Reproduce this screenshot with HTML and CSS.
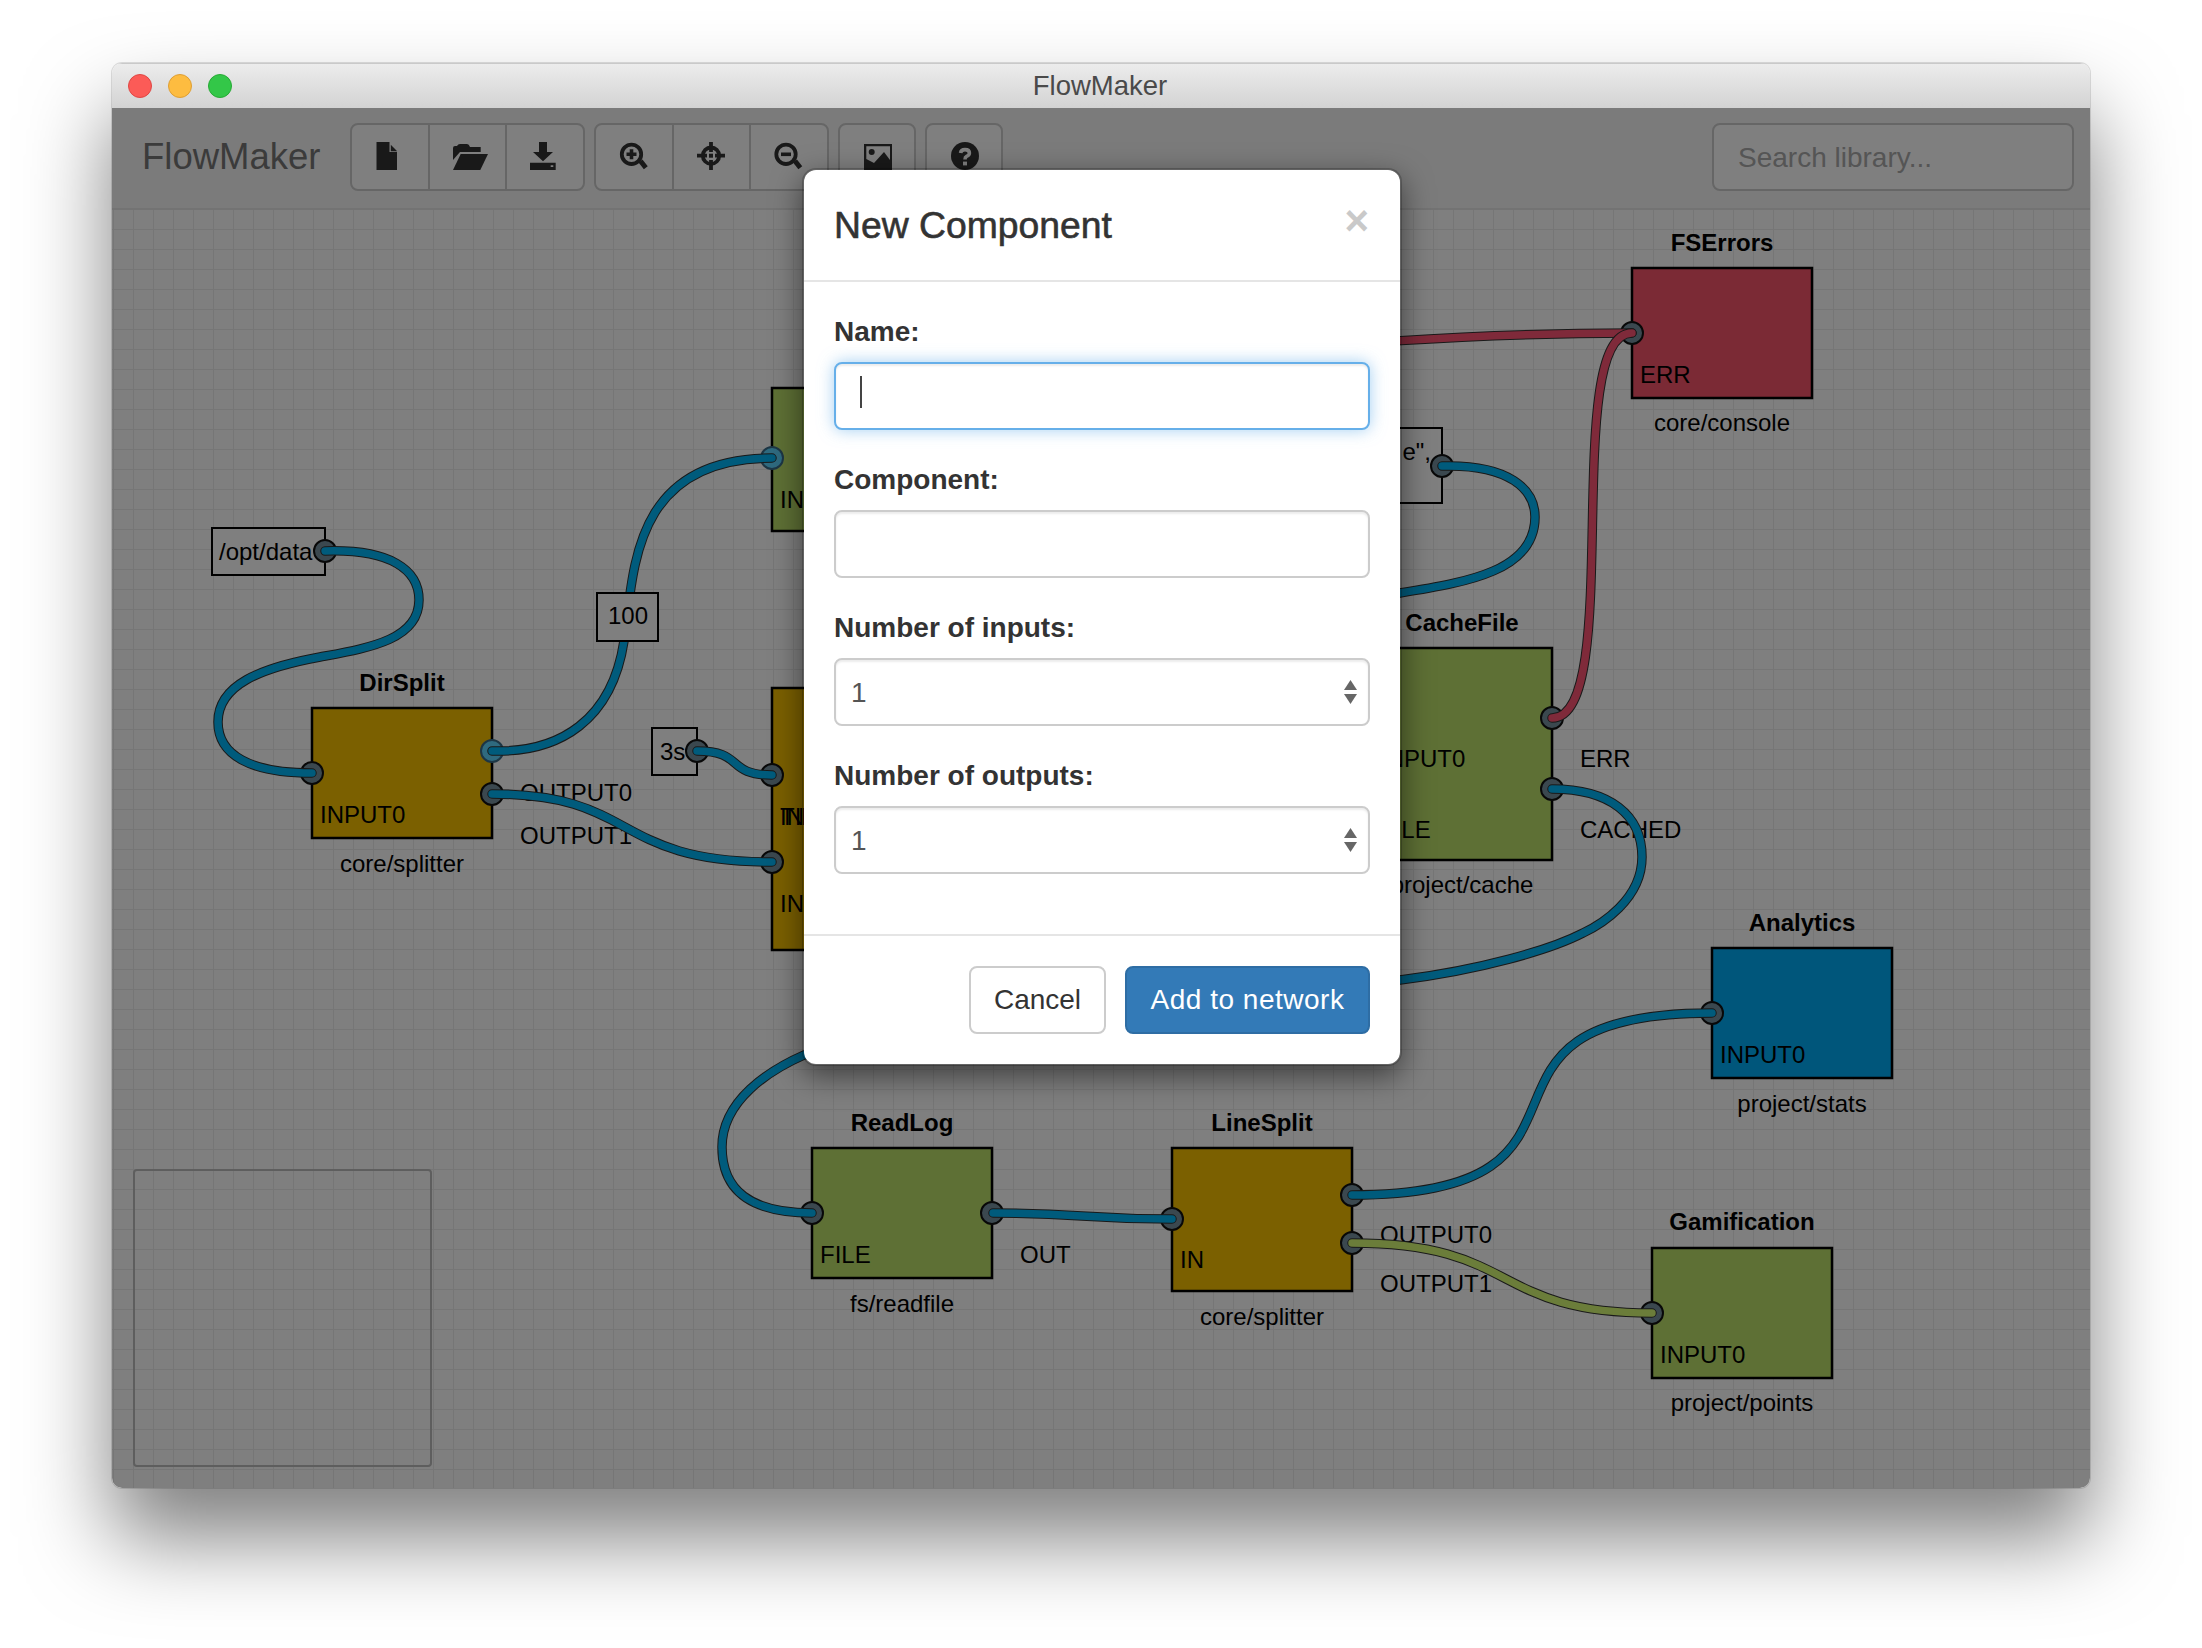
FILE: index.html
```html
<!DOCTYPE html>
<html lang="en">
<head>
<meta charset="utf-8">
<title>FlowMaker</title>
<link rel="stylesheet" href="styles.css">
</head>
<body>
<div class="window">
  <div class="titlebar">
    <div class="lights">
      <span class="light light-red"></span>
      <span class="light light-yellow"></span>
      <span class="light light-green"></span>
    </div>
    <div class="window-title">FlowMaker</div>
  </div>
  <div class="content">
    <div class="toolbar">
      <div class="brand">FlowMaker</div>
      <div class="btn-group group-3">
        <button class="tool" aria-label="New"><svg class="icon" viewBox="0 0 40 30"><path d="M6.5 0H19.5V10H27V28H6.5Z"/><path d="M20.8 2.7L27.2 9.3H20.8Z"/></svg></button>
        <button class="tool" aria-label="Open"><svg class="icon" viewBox="0 0 40 30"><path d="M5 6Q5 4 7 4H9Q10 2 12 2H19Q21 2 22 5H32.7V10H12L5 18Z"/><path d="M12.7 12H40L32.3 28H5Z"/></svg></button>
        <button class="tool" aria-label="Save"><svg class="icon" viewBox="0 0 40 30"><path d="M14 0H22V10H28L18 19.3L8 10H14Z"/><path fill-rule="evenodd" d="M5 20.7H30.7V28H5ZM25.7 23.3V25H28.3V23.3Z"/></svg></button>
      </div>
      <div class="btn-group group-3">
        <button class="tool" aria-label="Zoom in"><svg class="icon" viewBox="0 0 40 30"><circle class="line" cx="17.5" cy="12.3" r="9.7"/><path class="line-thick" d="M26.5 19L31.8 25.7"/><path d="M15.7 7.3H19.3V10.5H22.5V14.1H19.3V17.3H15.7V14.1H12.5V10.5H15.7Z"/></svg></button>
        <button class="tool" aria-label="Fit"><svg class="icon" viewBox="0 0 40 30"><circle class="line" cx="19" cy="13.7" r="8.2"/><path class="line" d="M5 13.7H15M23 13.7H33M19 0V10M19 18V28"/><rect x="17" y="11.7" width="4" height="4"/></svg></button>
        <button class="tool" aria-label="Zoom out"><svg class="icon" viewBox="0 0 40 30"><circle class="line" cx="17" cy="12.3" r="9.7"/><path class="line-thick" d="M26 19L31.3 25.7"/><rect x="12" y="10.5" width="10" height="3.6"/></svg></button>
      </div>
      <div class="btn-group group-1">
        <button class="tool" aria-label="Export"><svg class="icon" viewBox="0 0 40 30"><path fill-rule="evenodd" d="M7 2H35V30H7ZM9.3 4.3V17L17 21L27 10L33 18V4.3Z"/><circle cx="14.7" cy="10" r="3"/></svg></button>
      </div>
      <div class="btn-group group-1">
        <button class="tool" aria-label="Help"><svg class="icon" viewBox="0 0 40 30"><circle cx="21" cy="14" r="14"/><path class="hook" d="M16.6 11Q17 7.6 21 7.6Q25.4 7.6 25.4 11Q25.4 13.2 22.6 14.4Q21 15.2 21 17.6"/><rect class="hook-dot" x="19" y="19.6" width="4" height="3.8"/></svg></button>
      </div>
      <input class="search" type="text" placeholder="Search library...">
    </div>
    <div class="canvas">
      <svg class="graph" viewBox="112 210 1978 1278" width="1978" height="1278">
        <defs>
          <path id="w-optdata" d="M325 551C391 549 419 570 419 600C419 640 368 648 320 657C260 668 218 685 218 722C218 755 250 773 312 773"/>
          <path id="w-dir0" d="M492 751C560 753 612 720 624 641C634 570 632 458 772 458"/>
          <path id="w-dir1" d="M492 794C640 794 610 862 772 862"/>
          <path id="w-3s" d="M697 751C745 751 725 775 772 775"/>
          <path id="w-iip" d="M1442 466C1510 464 1535 490 1535 517C1535 570 1470 582 1400 593L1200 620"/>
          <path id="w-err1" d="M1200 360C1300 345 1480 333 1632 333"/>
          <path id="w-err2" d="M1552 718C1625 718 1560 333 1632 333"/>
          <path id="w-cached" d="M1552 789C1610 789 1642 815 1642 857C1642 900 1600 925 1583 933C1550 950 1480 970 1400 980L1100 1010L804 1055C770 1070 722 1100 722 1147C722 1190 750 1213 812 1213"/>
          <path id="w-out" d="M993 1213C1082 1213 1082 1219 1172 1219"/>
          <path id="w-stats" d="M1352 1195C1640 1195 1430 1013 1712 1013"/>
          <path id="w-points" d="M1352 1243C1520 1243 1490 1313 1652 1313"/>
        </defs>

        <rect class="node node-yellow" x="312" y="708" width="180" height="130"/>
        <text class="title" x="402" y="691">DirSplit</text>
        <text class="label" x="320" y="823">INPUT0</text>
        <text class="label" x="520" y="801">OUTPUT0</text>
        <text class="label" x="520" y="844">OUTPUT1</text>
        <text class="sub" x="402" y="872">core/splitter</text>

        <rect class="node node-green" x="772" y="388" width="182" height="143"/>
        <text class="label" x="780" y="508">IN</text>

        <rect class="node node-yellow" x="772" y="688" width="182" height="262"/>
        <text class="label" x="780" y="825">IN</text>
        <text class="label" x="780" y="825">TIMER</text>
        <text class="label" x="780" y="912">IN</text>

        <rect class="node node-green" x="1372" y="648" width="180" height="212"/>
        <text class="title" x="1462" y="631">CacheFile</text>
        <text class="label" x="1380" y="767">INPUT0</text>
        <text class="label" x="1380" y="838">FILE</text>
        <text class="label" x="1580" y="767">ERR</text>
        <text class="label" x="1580" y="838">CACHED</text>
        <text class="sub" x="1462" y="893">project/cache</text>

        <rect class="node node-red" x="1632" y="268" width="180" height="130"/>
        <text class="title" x="1722" y="251">FSErrors</text>
        <text class="label" x="1640" y="383">ERR</text>
        <text class="sub" x="1722" y="431">core/console</text>

        <rect class="node node-blue" x="1712" y="948" width="180" height="130"/>
        <text class="title" x="1802" y="931">Analytics</text>
        <text class="label" x="1720" y="1063">INPUT0</text>
        <text class="sub" x="1802" y="1112">project/stats</text>

        <rect class="node node-green" x="812" y="1148" width="180" height="130"/>
        <text class="title" x="902" y="1131">ReadLog</text>
        <text class="label" x="820" y="1263">FILE</text>
        <text class="label" x="1020" y="1263">OUT</text>
        <text class="sub" x="902" y="1312">fs/readfile</text>

        <rect class="node node-yellow" x="1172" y="1148" width="180" height="143"/>
        <text class="title" x="1262" y="1131">LineSplit</text>
        <text class="label" x="1180" y="1268">IN</text>
        <text class="label" x="1380" y="1243">OUTPUT0</text>
        <text class="label" x="1380" y="1292">OUTPUT1</text>
        <text class="sub" x="1262" y="1325">core/splitter</text>

        <rect class="node node-green" x="1652" y="1248" width="180" height="130"/>
        <text class="title" x="1742" y="1230">Gamification</text>
        <text class="label" x="1660" y="1363">INPUT0</text>
        <text class="sub" x="1742" y="1411">project/points</text>

        <rect class="iip" x="212" y="528" width="113" height="47"/>
        <text class="label" x="219" y="560">/opt/data</text>
        <rect class="iip" x="652" y="728" width="45" height="47"/>
        <text class="label" x="660" y="760">3s</text>
        <rect class="iip" x="1300" y="428" width="142" height="75"/>
        <text class="label label-end" x="1431" y="460">e",</text>

        <circle class="port" cx="325" cy="551" r="11"/>
        <circle class="port" cx="312" cy="773" r="11"/>
        <circle class="port port-hot" cx="492" cy="751" r="11"/>
        <circle class="port" cx="492" cy="794" r="11"/>
        <circle class="port port-hot" cx="772" cy="458" r="11"/>
        <circle class="port" cx="697" cy="751" r="11"/>
        <circle class="port" cx="772" cy="775" r="11"/>
        <circle class="port" cx="772" cy="862" r="11"/>
        <circle class="port" cx="1442" cy="466" r="11"/>
        <circle class="port" cx="1632" cy="333" r="11"/>
        <circle class="port" cx="1552" cy="718" r="11"/>
        <circle class="port" cx="1552" cy="789" r="11"/>
        <circle class="port" cx="1712" cy="1013" r="11"/>
        <circle class="port" cx="812" cy="1213" r="11"/>
        <circle class="port" cx="992" cy="1213" r="11"/>
        <circle class="port" cx="1172" cy="1219" r="11"/>
        <circle class="port" cx="1352" cy="1195" r="11"/>
        <circle class="port" cx="1352" cy="1243" r="11"/>
        <circle class="port" cx="1652" cy="1313" r="11"/>

        <use class="wire-edge" href="#w-optdata"/><use class="wire wire-blue" href="#w-optdata"/>
        <use class="wire-edge" href="#w-dir0"/><use class="wire wire-blue" href="#w-dir0"/>
        <use class="wire-edge" href="#w-dir1"/><use class="wire wire-blue" href="#w-dir1"/>
        <use class="wire-edge" href="#w-3s"/><use class="wire wire-blue" href="#w-3s"/>
        <use class="wire-edge" href="#w-iip"/><use class="wire wire-blue" href="#w-iip"/>
        <use class="wire-edge" href="#w-cached"/><use class="wire wire-blue" href="#w-cached"/>
        <use class="wire-edge" href="#w-err1"/><use class="wire wire-red" href="#w-err1"/>
        <use class="wire-edge" href="#w-err2"/><use class="wire wire-red" href="#w-err2"/>
        <use class="wire-edge" href="#w-out"/><use class="wire wire-blue" href="#w-out"/>
        <use class="wire-edge" href="#w-stats"/><use class="wire wire-blue" href="#w-stats"/>
        <use class="wire-edge" href="#w-points"/><use class="wire wire-green" href="#w-points"/>

        <rect class="iip" x="597" y="593" width="61" height="48"/>
        <text class="label label-mid" x="628" y="624">100</text>
      </svg>
      <div class="minimap"></div>
    </div>
    <div class="backdrop">
      <div class="modal">
        <div class="modal-header">
          <h4 class="modal-title">New Component</h4>
          <span class="close">×</span>
        </div>
        <div class="modal-body">
          <div class="form-group">
            <label class="form-label">Name:</label>
            <div class="field">
              <input class="form-control is-focus" type="text">
              <span class="caret"></span>
            </div>
          </div>
          <div class="form-group">
            <label class="form-label">Component:</label>
            <div class="field">
              <input class="form-control" type="text">
            </div>
          </div>
          <div class="form-group">
            <label class="form-label">Number of inputs:</label>
            <div class="field">
              <select class="form-control form-select"><option>1</option></select>
              <svg class="spin" viewBox="0 0 13 24"><path d="M6.5 0L13 10H0Z"/><path d="M0 14H13L6.5 24Z"/></svg>
            </div>
          </div>
          <div class="form-group">
            <label class="form-label">Number of outputs:</label>
            <div class="field">
              <select class="form-control form-select"><option>1</option></select>
              <svg class="spin" viewBox="0 0 13 24"><path d="M6.5 0L13 10H0Z"/><path d="M0 14H13L6.5 24Z"/></svg>
            </div>
          </div>
        </div>
        <div class="modal-footer">
          <button class="btn btn-default">Cancel</button>
          <button class="btn btn-primary">Add to network</button>
        </div>
      </div>
    </div>
  </div>
</div>
</body>
</html>
```

FILE: styles.css
```css
* { box-sizing: border-box; }
html, body { margin: 0; background: #fff; }
body {
  width: 2202px;
  height: 1648px;
  padding: 63px 112px 0;
  overflow: hidden;
  font-family: "Liberation Sans", Arial, sans-serif;
  font-size: 28px;
  color: #333;
}

.window {
  width: 1978px;
  height: 1425px;
  display: flex;
  flex-direction: column;
  border-radius: 10px;
  overflow: hidden;
  box-shadow: 0 50px 85px rgba(0, 0, 0, .5), 0 0 0 1px rgba(0, 0, 0, .12);
}

.titlebar {
  height: 45px;
  flex: none;
  display: grid;
  grid-template-columns: 1fr auto 1fr;
  align-items: center;
  background: linear-gradient(#ececec, #d3d3d3);
  border-top: 1px solid #c9c9c9;
}
.lights { display: flex; gap: 16px; padding-left: 16px; }
.light { width: 24px; height: 24px; border-radius: 50%; }
.light-red { background: #fc5b57; border: 1px solid #df4744; }
.light-yellow { background: #fdbc40; border: 1px solid #de9f34; }
.light-green { background: #33c748; border: 1px solid #27aa35; }
.window-title { font-size: 27.5px; color: #4a4a4a; margin-left: -2px; }

.content {
  position: relative;
  flex: 1;
  display: flex;
  flex-direction: column;
  min-height: 0;
}

.toolbar {
  height: 102px;
  flex: none;
  display: flex;
  align-items: center;
  gap: 9px;
  padding-bottom: 2px;
  background: #f7f7f7;
  border-bottom: 2px solid #e7e7e7;
}
.brand {
  width: 229px;
  padding-left: 30px;
  font-size: 36.5px;
  color: #777;
}
.btn-group {
  height: 68px;
  display: flex;
  border: 2px solid #ccc;
  border-radius: 8px;
  background: #fff;
  overflow: hidden;
}
.group-3 { width: 235px; }
.group-1 { width: 78px; }
.tool {
  flex: 1;
  min-width: 0;
  padding: 0;
  border: 0;
  background: transparent;
  display: flex;
  align-items: center;
  justify-content: center;
}
.tool + .tool { border-left: 2px solid #ccc; }
.icon { width: 40px; height: 30px; display: block; fill: #333; }
.icon .line { fill: none; stroke: #333; stroke-width: 3.8; }
.icon .line-thick { fill: none; stroke: #333; stroke-width: 5; }
.icon .hook { fill: none; stroke: #fff; stroke-width: 3.6; }
.icon .hook-dot { fill: #fff; }

.search {
  width: 362px;
  height: 68px;
  margin-left: auto;
  margin-right: 16px;
  padding: 2px 24px 0;
  border: 2px solid #ccc;
  border-radius: 8px;
  background: #fff;
  font: 28px "Liberation Sans", Arial, sans-serif;
  color: #555;
}
.search::placeholder { color: #aaa; opacity: 1; }

.canvas {
  position: relative;
  flex: 1;
  background-color: #fff;
  background-image:
    linear-gradient(to right, #ececec 1px, transparent 1px),
    linear-gradient(to bottom, #ececec 1px, transparent 1px);
  background-size: 20px 20px;
  background-position: 1px 19px;
}
.graph { position: absolute; left: 0; top: 0; display: block; }
.minimap {
  position: absolute;
  left: 21px;
  top: 959px;
  width: 299px;
  height: 298px;
  border: 2px solid #bcbcbc;
  border-radius: 4px;
}

.node { stroke: #000; stroke-width: 2.5; }
.node-yellow { fill: #f6c000; }
.node-green { fill: #bce06a; }
.node-red { fill: #f6546a; }
.node-blue { fill: #00acf6; }
.iip { fill: #fff; stroke: #000; stroke-width: 2; }
.title, .sub, .label {
  font-family: "Liberation Sans", Arial, sans-serif;
  font-size: 24px;
  fill: #000;
}
.title { font-weight: 700; text-anchor: middle; }
.sub { text-anchor: middle; }
.label-mid { text-anchor: middle; }
.label-end { text-anchor: end; }
.port { fill: #76909e; stroke: #111; stroke-width: 2; }
.port-hot { fill: #5ed4ff; stroke: #3a6c8a; }
.wire-edge { fill: none; stroke: #333; stroke-width: 9.5; stroke-linecap: round; }
.wire { fill: none; stroke-width: 7.5; stroke-linecap: round; }
.wire-blue { stroke: #00b6f8; }
.wire-red { stroke: #fe5474; }
.wire-green { stroke: #d6fa74; }

.backdrop {
  position: absolute;
  inset: 0;
  display: flex;
  justify-content: center;
  align-items: flex-start;
  padding: 60px 0 0 2px;
  background: rgba(0, 0, 0, .5);
}
.modal {
  width: 600px;
  background: #fff;
  background-clip: padding-box;
  border: 2px solid rgba(0, 0, 0, .2);
  border-radius: 14px;
  box-shadow: 0 10px 30px rgba(0, 0, 0, .5);
}
.modal-header {
  display: flex;
  justify-content: space-between;
  align-items: flex-start;
  padding: 30px 30px 29px;
  border-bottom: 2px solid #e5e5e5;
}
.modal-title {
  margin: 0;
  font-size: 37.3px;
  line-height: 51px;
  font-weight: 400;
  -webkit-text-stroke: .6px #333;
  color: #333;
}
.close {
  font-size: 42px;
  line-height: 42px;
  font-weight: 700;
  color: #c9c9c9;
  margin-right: 1px;
}
.modal-body { padding: 30px; }
.form-group { margin-bottom: 30px; }
.form-label {
  display: block;
  margin-bottom: 10px;
  line-height: 40px;
  font-weight: 700;
  color: #333;
}
.field { position: relative; }
.form-control {
  display: block;
  width: 100%;
  height: 68px;
  padding: 0 24px;
  border: 2px solid #ccc;
  border-radius: 8px;
  background: #fff;
  font: 28px "Liberation Sans", Arial, sans-serif;
  color: #555;
  box-shadow: inset 0 2px 2px rgba(0, 0, 0, .075);
  outline: 0;
}
.is-focus {
  border-color: #66afe9;
  box-shadow: inset 0 2px 2px rgba(0, 0, 0, .075), 0 0 16px rgba(102, 175, 233, .6);
}
.form-select {
  appearance: none;
  -webkit-appearance: none;
  padding-left: 15px;
}
.caret {
  position: absolute;
  left: 26px;
  top: 14px;
  width: 2px;
  height: 32px;
  background: #444;
}
.spin {
  position: absolute;
  right: 13px;
  top: 22px;
  width: 13px;
  height: 24px;
  fill: #666;
}
.modal-footer {
  display: flex;
  justify-content: flex-end;
  gap: 19px;
  padding: 30px;
  border-top: 2px solid #e5e5e5;
}
.btn {
  height: 68px;
  border: 2px solid transparent;
  border-radius: 8px;
  font: 28px "Liberation Sans", Arial, sans-serif;
}
.btn-default {
  width: 137px;
  padding: 0;
  background: #fff;
  border-color: #ccc;
  color: #333;
}
.btn-primary {
  width: 245px;
  padding: 0;
  background: #337ab7;
  border-color: #2e6da4;
  color: #fff;
  letter-spacing: .5px;
}
```
